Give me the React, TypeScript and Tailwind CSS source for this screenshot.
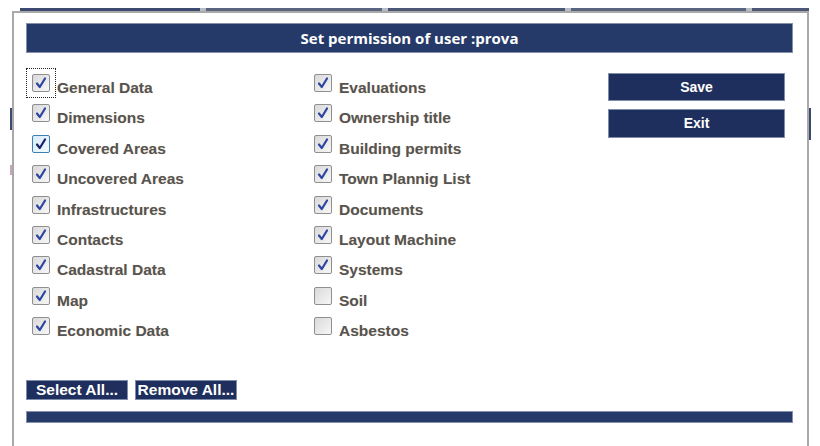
import React from 'react'

const left = [
  { label: 'General Data', checked: true, focus: true },
  { label: 'Dimensions', checked: true },
  { label: 'Covered Areas', checked: true, hover: true },
  { label: 'Uncovered Areas', checked: true },
  { label: 'Infrastructures', checked: true },
  { label: 'Contacts', checked: true },
  { label: 'Cadastral Data', checked: true },
  { label: 'Map', checked: true },
  { label: 'Economic Data', checked: true },
]

const right = [
  { label: 'Evaluations', checked: true },
  { label: 'Ownership title', checked: true },
  { label: 'Building permits', checked: true },
  { label: 'Town Plannig List', checked: true },
  { label: 'Documents', checked: true },
  { label: 'Layout Machine', checked: true },
  { label: 'Systems', checked: true },
  { label: 'Soil', checked: false },
  { label: 'Asbestos', checked: false },
]

type Item = { label: string; checked: boolean; focus?: boolean; hover?: boolean }

function Box({ checked, hover }: { checked: boolean; hover?: boolean }) {
  return (
    <span
      className={
        'w-[18px] h-[18px] shrink-0 rounded-[2px] border flex items-center justify-center ' +
        (hover
          ? 'border-[#3c7fb1] bg-gradient-to-br from-[#d8ecfb] to-[#f4faff]'
          : 'border-[#8f8f8f] bg-gradient-to-br from-[#d9d9d9] to-[#f7f7f7]')
      }
    >
      {checked && (
        <svg width="14" height="14" viewBox="0 0 14 14">
          <path d="M3 7.5 L5.8 11 L11 2.5" fill="none" stroke={hover ? '#16226a' : '#2b45a0'} strokeWidth="2.2" strokeLinecap="round" strokeLinejoin="round" />
        </svg>
      )}
    </span>
  )
}

function Row({ item }: { item: Item }) {
  return (
    <div className="h-[30.4px] flex items-start">
      <div className={'flex items-center justify-center w-[30px] h-[30px] -ml-[6px] -mt-[6px] ' + (item.focus ? 'border border-dotted border-[#222]' : '')}>
        <Box checked={item.checked} hover={item.hover} />
      </div>
      <span className="pt-[5px] pl-[1px] leading-[17px] text-[15.5px] font-bold text-[#545454] [text-shadow:0_0_1px_rgba(210,140,60,0.35)] whitespace-nowrap">
        {item.label}
      </span>
    </div>
  )
}

export default function App() {
  return (
    <div className="w-[820px] h-[446px] overflow-hidden bg-white flex flex-col" style={{ fontFamily: '"Liberation Sans", Arial, sans-serif' }}>
      {/* page nav peeking above the dialog */}
      <div className="h-[11px] pt-[8px] flex shrink-0">
        <div className="w-[20px]" />
        <div className="w-[180px] h-[4px] bg-[#3b4a6e]" />
        <div className="w-[6px] h-[4px] bg-[#b8bcc4]" />
        <div className="w-[176px] h-[4px] bg-[#59647e]" />
        <div className="w-[6px] h-[4px] bg-[#b8bcc4]" />
        <div className="w-[177px] h-[4px] bg-[#4b5775]" />
        <div className="w-[6px] h-[4px] bg-[#b8bcc4]" />
        <div className="w-[175px] h-[4px] bg-[#59647e]" />
        <div className="w-[6px] h-[4px] bg-[#b8bcc4]" />
        <div className="w-[57px] h-[4px] bg-[#4b5775]" />
      </div>

      <div className="flex flex-1 min-h-0">
        <div className="w-[12px] shrink-0 flex flex-col items-end">
          <div className="mt-[97px] w-[2px] h-[22px] bg-[#3c4a70]" />
          <div className="mt-[35px] w-[2px] h-[10px] bg-[#c9a4b8]" />
        </div>

        <div className="w-[797px] shrink-0 border-l-2 border-r-2 border-t-2 border-[#a9a9a9] bg-white pl-[12px] pr-[14px] pt-[10px]">
          <div className="h-[30px] bg-[#253a68] border border-[#8591ab] flex items-center justify-center text-white font-bold text-[15px]" style={{ fontFamily: '"Open Sans", "Liberation Sans", sans-serif' }}>
            Set permission of user :prova
          </div>

          <div className="flex mt-[21px] h-[306px]">
            <div className="w-[288px] pl-[6px]">
              {left.map((it) => (
                <Row key={it.label} item={it} />
              ))}
            </div>
            <div className="w-[294px]">
              {right.map((it) => (
                <Row key={it.label} item={it} />
              ))}
            </div>
            <div className="flex flex-col gap-[8px] -mt-[1px]">
              <button className="w-[177px] h-[28px] bg-[#1f2f5d] border border-[#7f8cab] text-white font-bold text-[14px]">Save</button>
              <button className="w-[177px] h-[29px] bg-[#1f2f5d] border border-[#7f8cab] text-white font-bold text-[14px]">Exit</button>
            </div>
          </div>

          <div className="flex gap-[7px]">
            <button className="w-[102px] h-[20px] bg-[#1f2f5d] border border-[#7f8cab] text-white font-bold text-[15.5px] leading-none text-center whitespace-nowrap">Select All...</button>
            <button className="w-[102px] h-[20px] bg-[#1f2f5d] border border-[#7f8cab] text-white font-bold text-[15.5px] leading-none text-center whitespace-nowrap">Remove All...</button>
          </div>

          <div className="mt-[11px] h-[12px] bg-[#253a68] border border-[#8591ab]" />
        </div>

        <div className="flex-1 flex flex-col">
          <div className="mt-[97px] w-[2px] h-[32px] bg-[#3c4a70]" />
        </div>
      </div>
    </div>
  )
}
